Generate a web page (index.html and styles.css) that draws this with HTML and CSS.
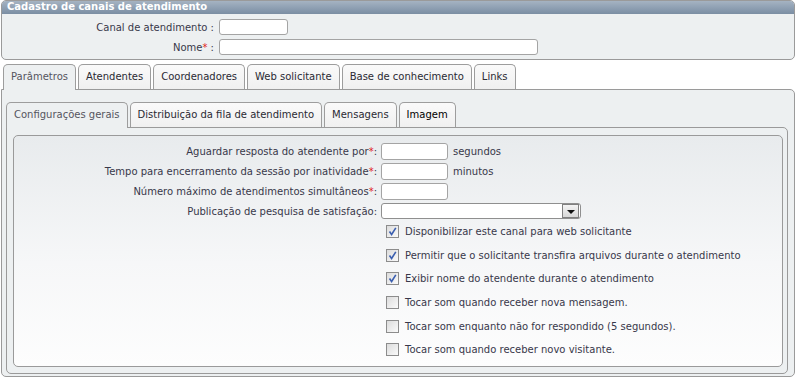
FILE: index.html
```html
<!DOCTYPE html>
<html lang="pt-BR">
<head>
  <meta charset="UTF-8" />
  <title>Cadastro de canais de atendimento</title>
  <link rel="stylesheet" href="styles.css">
</head>
<body>
  <!-- Cabeçalho do cadastro -->
  <div class="painel">
    <div class="painel-titulo">Cadastro de canais de atendimento</div>
    <div class="painel-corpo">
      <label class="rotulo">Canal de atendimento :</label>
      <input class="campo campo-curto" type="text" />
      <label class="rotulo">Nome<span class="obrig">*</span> :</label>
      <input class="campo campo-longo" type="text" />
    </div>
  </div>

  <!-- Abas principais -->
  <div class="abas">
    <ul class="barra-abas">
      <li class="aba ativa">Parâmetros</li>
      <li class="aba">Atendentes</li>
      <li class="aba">Coordenadores</li>
      <li class="aba">Web solicitante</li>
      <li class="aba">Base de conhecimento</li>
      <li class="aba">Links</li>
    </ul>

    <div class="conteudo-aba">
      <ul class="barra-abas sub">
        <li class="aba ativa">Configurações gerais</li>
        <li class="aba">Distribuição da fila de atendimento</li>
        <li class="aba">Mensagens</li>
        <li class="aba destaque">Imagem</li>
      </ul>

      <div class="conteudo-aba interno">
        <div class="caixa">
          <div class="form-grade">
            <label class="rotulo">Aguardar resposta do atendente por<span class="obrig">*</span>:</label>
            <div class="linha"><input class="campo campo-num" type="text" /> <span>segundos</span></div>

            <label class="rotulo">Tempo para encerramento da sessão por inatividade<span class="obrig">*</span>:</label>
            <div class="linha"><input class="campo campo-num" type="text" /> <span>minutos</span></div>

            <label class="rotulo">Número máximo de atendimentos simultâneos<span class="obrig">*</span>:</label>
            <div class="linha"><input class="campo campo-num" type="text" /></div>

            <label class="rotulo">Publicação de pesquisa de satisfação:</label>
            <div class="linha">
              <div class="combo"><span class="combo-botao"></span></div>
            </div>
          </div>

          <ul class="opcoes">
            <li><span class="check marcado"><svg viewBox="0 0 9 9" width="9" height="9"><path d="M1.5 4.5 L3.6 7.5 L7.8 0.8" fill="none" stroke="#3b5fb0" stroke-width="1.6"/></svg></span>Disponibilizar este canal para web solicitante</li>
            <li><span class="check marcado"><svg viewBox="0 0 9 9" width="9" height="9"><path d="M1.5 4.5 L3.6 7.5 L7.8 0.8" fill="none" stroke="#3b5fb0" stroke-width="1.6"/></svg></span>Permitir que o solicitante transfira arquivos durante o atendimento</li>
            <li><span class="check marcado"><svg viewBox="0 0 9 9" width="9" height="9"><path d="M1.5 4.5 L3.6 7.5 L7.8 0.8" fill="none" stroke="#3b5fb0" stroke-width="1.6"/></svg></span>Exibir nome do atendente durante o atendimento</li>
            <li><span class="check"></span>Tocar som quando receber nova mensagem.</li>
            <li><span class="check"></span>Tocar som enquanto não for respondido (5 segundos).</li>
            <li><span class="check"></span>Tocar som quando receber novo visitante.</li>
          </ul>
        </div>
      </div>
    </div>
  </div>
</body>
</html>
```

FILE: styles.css
```css
body {
  margin: 0;
  padding: 0 2px 0 1px;
  background: #fff;
  font-family: "DejaVu Sans", Verdana, sans-serif;
  font-size: 10px;
  color: #38384a;
}

/* painel do topo */
.painel {
  border: 1px solid #9a9a9a;
  border-radius: 5px;
  background: #edf0f1;
  height: 58px;
  overflow: hidden;
}

.painel-titulo {
  height: 13px;
  line-height: 12px;
  padding-left: 5px;
  color: #fff;
  font-weight: bold;
  background: linear-gradient(#a5b3c2, #8799ad 70%, #7b8ea3);
}

.painel-corpo {
  display: grid;
  grid-template-columns: 212px auto;
  column-gap: 5px;
  row-gap: 4px;
  align-items: center;
  padding-top: 5px;
}

.rotulo {
  text-align: right;
  white-space: nowrap;
}

.obrig {
  color: #e02020;
}

.campo {
  box-sizing: border-box;
  height: 16px;
  border: 1px solid #a4a4a4;
  border-radius: 3px;
  background: #fff;
  padding: 0;
  margin: 0;
}

.campo-curto { width: 69px; }
.campo-longo { width: 319px; }

/* abas */
.abas {
  margin-top: 4px;
}

.barra-abas {
  list-style: none;
  margin: 0;
  padding: 0 0 0 2px;
  display: flex;
  gap: 2px;
  position: relative;
  z-index: 1;
}

.aba {
  box-sizing: border-box;
  height: 25px;
  line-height: 24px;
  padding: 0 7px;
  border: 1px solid #9d9d9d;
  border-bottom: none;
  border-radius: 5px 5px 0 0;
  background: linear-gradient(#fafafa, #f0f0f0);
  color: #2a2a33;
  white-space: nowrap;
}

.aba.ativa {
  background: #edf0f1;
  color: #55555e;
  height: 26px;
  margin-bottom: -1px;
  padding: 0 7px;
}

.aba.destaque {
  color: #000;
}

.conteudo-aba {
  border: 1px solid #9a9a9a;
  border-radius: 0 5px 5px 5px;
  background: #edf0f1;
  padding: 12px 6px 0 4px;
  box-sizing: border-box;
  height: 288px;
}

.barra-abas.sub {
  padding-left: 0;
}

.conteudo-aba.interno {
  height: 247px;
  padding: 7px 4px 0 6px;
  border-radius: 0 5px 5px 5px;
}

.caixa {
  box-sizing: border-box;
  height: 232px;
  border: 1px solid #9a9a9a;
  border-radius: 5px;
  background: linear-gradient(#e8ebed, #f6f7f8 55%, #fdfdfd);
  padding-top: 7px;
}

.form-grade {
  display: grid;
  grid-template-columns: 363px auto;
  column-gap: 4px;
  row-gap: 3px;
  align-items: center;
}

.linha {
  display: flex;
  align-items: center;
  gap: 5px;
}

.campo-num {
  width: 67px;
  height: 17px;
}

.combo {
  box-sizing: border-box;
  width: 200px;
  height: 16px;
  border: 1px solid #8f8f8f;
  border-radius: 3px;
  background: #fff;
  display: flex;
  justify-content: flex-end;
  align-items: center;
  padding-right: 1px;
}

.combo-botao {
  width: 15px;
  height: 12px;
  border: 1px solid #808080;
  background: linear-gradient(#f4f4f4, #d8d8d8);
  position: relative;
}

.combo-botao::after {
  content: "";
  position: absolute;
  left: 4px;
  top: 5px;
  border-left: 4px solid transparent;
  border-right: 4px solid transparent;
  border-top: 4px solid #111;
}

/* opções */
.opcoes {
  list-style: none;
  margin: 1px 0 0 372px;
  padding: 0;
}

.opcoes li {
  height: 23.6px;
  display: flex;
  align-items: center;
}

.check {
  box-sizing: border-box;
  width: 13px;
  height: 13px;
  border: 1px solid #8c8c8c;
  background: linear-gradient(135deg, #dcdcdc, #fafafa);
  margin-right: 6px;
  display: flex;
  align-items: center;
  justify-content: center;
}
```
